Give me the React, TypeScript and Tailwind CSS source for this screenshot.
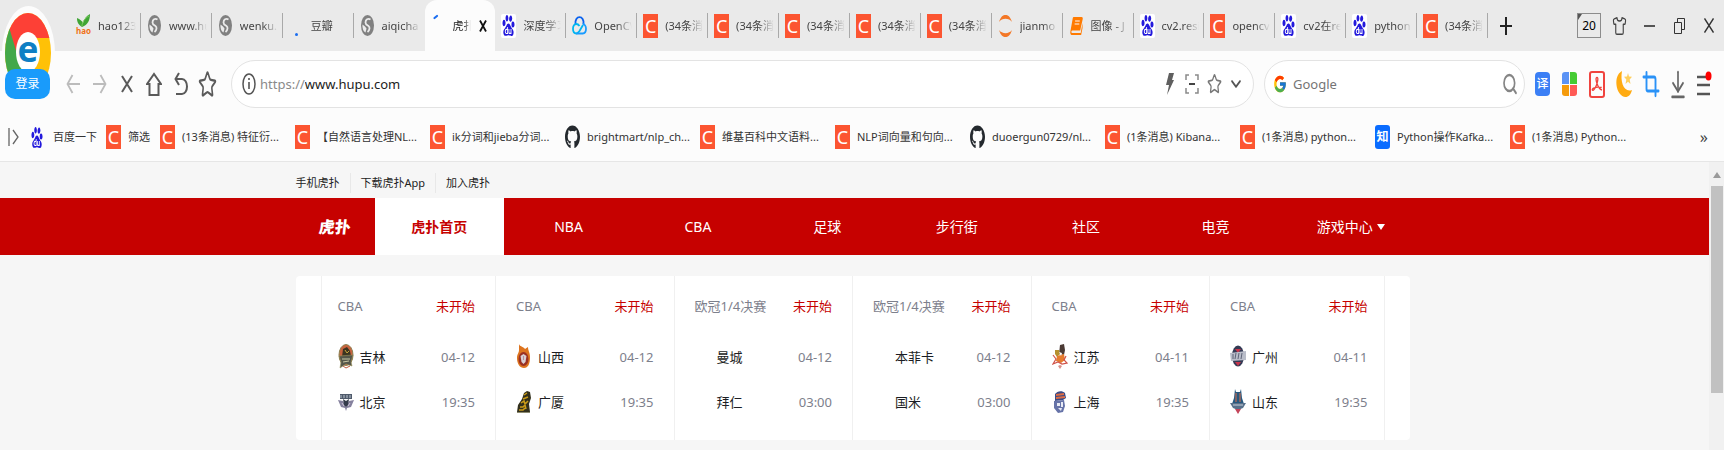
import type { ReactNode } from 'react';
import { SiBaidu } from 'react-icons/si';
import { FaGithub } from 'react-icons/fa';
import { FcGoogle } from 'react-icons/fc';
import { ArrowDownToLine, ChevronDown, Crop, Search, Shirt, Star } from 'lucide-react';

const CsdnIcon = () => (
  <span aria-hidden="true" className="flex h-6 w-[15px] shrink-0 items-center justify-center bg-[#fc5531] text-[18px] leading-6 text-white">
    C
  </span>
);

const BaiduIcon = ({ plain = false }: { plain?: boolean }) => (
  <span className={plain ? 'flex h-6 w-3 shrink-0 items-center' : 'flex h-6 w-[15px] shrink-0 items-center rounded-xs bg-white px-px'}>
    <SiBaidu preserveAspectRatio="none" className="h-[21px] w-full text-[#2319dc]" />
  </span>
);

const GlobeIcon = () => (
  <svg viewBox="0 0 13 21" className="h-[21px] w-[13px] shrink-0">
    <ellipse cx="6.500" cy="10.500" rx="6.500" ry="10.500" fill="#808080" />
    <path d="M9.500 4.500C7 3 4.500 4.500 4.500 7.500c0 2 1.500 2.500 3 3.500s1.500 4-1 6" fill="none" stroke="#ebebeb" strokeWidth="1.800" />
    <path d="M1.500 9.500l2.500 2 1.500 2-1 4C2.300 16.500 1.200 13 1.500 9.500Z" fill="#ebebeb" />
  </svg>
);

const GithubIcon = () => (
  <FaGithub preserveAspectRatio="none" className="h-6 w-[15px] shrink-0 text-[#24292e]" />
);

const HaoIcon = () => (
  <span aria-hidden="true" className="flex h-6 w-[15px] shrink-0 flex-col items-center">
    <svg viewBox="0 0 15 13" className="h-[13px] w-[15px]">
      <path d="M6 13C2 10 1 8 1 4c3 1 5 3 6 5 1-4 3-7 7-9 0 6-2 11-8 13Z" fill="#3fa535" />
      <path d="M6 12c0-4 3-8 7-10" stroke="#7ccb5f" fill="none" />
    </svg>
    <span className="text-[8px] leading-[8px] font-bold text-[#f07318]">hao</span>
  </span>
);

const CloudIcon = () => (
  <svg viewBox="0 0 15 19" className="h-[19px] w-[15px] shrink-0" fill="none" strokeWidth="1.800">
    <path d="M3.500 8C3 4 5 1.200 7.500 1.200S12 4 11.500 8" stroke="#0a62ee" />
    <path d="M7.500 10C6.500 8.500 5.500 8 4.300 8 2.400 8 1 10 1 12.800S2.400 17.500 4.300 17.500c1.200 0 2-.8 3.200-2.500L11 9" stroke="#00b6f0" />
    <path d="M4.300 17.500h6.400c1.900 0 3.300-2 3.300-4.700S12.600 8 10.700 8" stroke="#1a9cff" />
  </svg>
);

const JupyterIcon = () => (
  <svg viewBox="0 0 15 24" className="h-6 w-[15px] shrink-0" fill="#f37726">
    <path d="M1 8C3 2 5 1 7.500 1S12 2 14 8C11 3.800 4 3.800 1 8Z" />
    <path d="M1 16c2 6 4 7 6.500 7s4.500-1 6.500-7c-3 4.200-10 4.200-13 0Z" />
  </svg>
);

const BookIcon = () => (
  <svg viewBox="0 0 14 20" preserveAspectRatio="none" className="h-5 w-[13px] shrink-0">
    <path d="M4 1h8.500c1 0 1.500.8 1.200 2L11 14.500H2.500C1.500 14.500 1 16 2 17h9.500l2-10v5l-1.500 7H2C.5 19 0 17 .4 15.500L3 2c.2-.7.400-1 1-1Z" fill="#ff7a00" />
    <path d="M5.500 5h5M5 8h5" stroke="#fff" />
  </svg>
);

const SpinnerDot = () => (
  <span className="flex h-6 w-[15px] shrink-0 items-end justify-center pb-0.5">
    <span className="size-[3px] rounded-full bg-[#1a6df0]" />
  </span>
);

const SpinnerArc = () => (
  <svg viewBox="0 0 15 24" className="h-6 w-[15px] shrink-0">
    <path d="M3.500 4 6 2" stroke="#1a6df0" strokeWidth="2.200" strokeLinecap="round" />
  </svg>
);

const ZhihuIcon = () => (
  <span aria-hidden="true" className="flex h-6 w-[15px] shrink-0 items-center justify-center rounded-[3px] bg-[#0a6cff] text-[12px] font-bold text-white">
    知
  </span>
);

type Tab = { label: string; icon: ReactNode; active?: boolean };

const tabs: Tab[] = [
  { label: 'hao123', icon: <HaoIcon /> },
  { label: 'www.hu', icon: <GlobeIcon /> },
  { label: 'wenku.', icon: <GlobeIcon /> },
  { label: '豆瓣', icon: <SpinnerDot /> },
  { label: 'aiqicha', icon: <GlobeIcon /> },
  { label: '虎扑', icon: <SpinnerArc />, active: true },
  { label: '深度学习', icon: <BaiduIcon /> },
  { label: 'OpenCV', icon: <CloudIcon /> },
  { label: '(34条消息', icon: <CsdnIcon /> },
  { label: '(34条消息', icon: <CsdnIcon /> },
  { label: '(34条消息', icon: <CsdnIcon /> },
  { label: '(34条消息', icon: <CsdnIcon /> },
  { label: '(34条消息', icon: <CsdnIcon /> },
  { label: 'jianmo', icon: <JupyterIcon /> },
  { label: '图像 - J', icon: <BookIcon /> },
  { label: 'cv2.resi', icon: <BaiduIcon /> },
  { label: 'opencv', icon: <CsdnIcon /> },
  { label: 'cv2在re', icon: <BaiduIcon /> },
  { label: 'python', icon: <BaiduIcon /> },
  { label: '(34条消息', icon: <CsdnIcon /> },
];

const bookmarks: { label: string; icon: ReactNode }[] = [
  { label: '(13条消息) 特征衍...', icon: <CsdnIcon /> },
  { label: '【自然语言处理NL...', icon: <CsdnIcon /> },
  { label: 'ik分词和jieba分词...', icon: <CsdnIcon /> },
  { label: 'brightmart/nlp_ch...', icon: <GithubIcon /> },
  { label: '维基百科中文语料...', icon: <CsdnIcon /> },
  { label: 'NLP词向量和句向...', icon: <CsdnIcon /> },
  { label: 'duoergun0729/nl...', icon: <GithubIcon /> },
  { label: '(1条消息) Kibana...', icon: <CsdnIcon /> },
  { label: '(1条消息) python...', icon: <CsdnIcon /> },
  { label: 'Python操作Kafka...', icon: <ZhihuIcon /> },
  { label: '(1条消息) Python...', icon: <CsdnIcon /> },
];

const navItems = ['虎扑首页', 'NBA', 'CBA', '足球', '步行街', '社区', '电竞', '游戏中心'];

const JilinLogo = () => (
  <svg viewBox="0 0 16 25" className="h-[25px] w-4">
    <ellipse cx="8" cy="11" rx="7" ry="10.500" fill="#c9633f" stroke="#8a8152" />
    <path d="M5 5l4-2 3 4 1 5-9 1Z" fill="#3b3420" />
    <path d="M7 6l2 3 2-2" stroke="#c8a23c" fill="none" />
    <path d="M1 12l14-1-2 7 1 4-6-2-6 4 1-6Z" fill="#55564a" stroke="#9b9159" strokeWidth=".6" />
    <path d="M4 15h8M5 18l6-1" stroke="#c9c8a4" />
    <path d="M5 22l3 2 4-2" stroke="#c05b3d" fill="none" />
  </svg>
);

const BeijingLogo = () => (
  <svg viewBox="0 0 16 25" className="h-[25px] w-4">
    <path d="M2 5h12v5H2Z" fill="#4f5a6b" />
    <path d="M3 6v3M6 6v3M9 6v3M12 6v3" stroke="#bcc5d0" />
    <path d="M0 11l5 1 3 6 3-6 5-1-3 7-4 1-1 3-1-3-4-1Z" fill="#85819e" />
    <path d="M5 10l3 2 3-2-1 6-2 2-2-2Z" fill="#343b4b" />
    <path d="M4 14l2 3M12 14l-2 3" stroke="#d2c9d8" />
  </svg>
);

const ShanxiLogo = () => (
  <svg viewBox="0 0 16 25" className="h-[25px] w-4">
    <path d="M3 0c1 3 4 2 6 5l3-2c0 4 2 5 2 10 0 7-2 11-6 11S1 20 1 14c0-4 2-5 2-8Z" fill="#dd741f" />
    <ellipse cx="7.500" cy="15" rx="5" ry="7" fill="#9b3022" />
    <path d="M4.500 12l3-2 3 2-1 6-2 2-2-2Z" fill="#d8cfd4" />
    <path d="M7.500 12v4" stroke="#b98d98" />
  </svg>
);

const GuangshaLogo = () => (
  <svg viewBox="0 0 16 25" className="h-[25px] w-4">
    <path d="M8 4l3-2 3 1 1 6-2 6 1 8H1l1-7 4-6Z" fill="#33301c" />
    <path d="M8 6l3-2M7 10l5-2M5 14l3-2 1 3 3-3M4 18h3l2-2 1 4M3 21h4l2-2" stroke="#c99b18" strokeWidth="1.500" fill="none" />
    <path d="M1 23.500h13" stroke="#8b8a70" />
  </svg>
);

const JiangsuLogo = () => (
  <svg viewBox="0 0 16 25" className="h-[25px] w-4">
    <path d="M8 1l4-1 1 6-1 5-5-1Z" fill="#4a3a34" />
    <path d="M3 6l4 0 1 4-3 3-2-3Z" fill="#b5902f" />
    <path d="M5 12l7-2 1 6-4 3-5-2Z" fill="#e57c2e" />
    <path d="M7 8l3 1-1 3Z" fill="#fff" />
    <path d="M1 11l3 4-3 5 5-2 4 2 5-1-3-3 2-4" stroke="#d05349" strokeWidth="1.200" fill="none" />
    <path d="M6 22l2-1 2 1-2 3Z" fill="#d98e88" />
  </svg>
);

const ShanghaiLogo = () => (
  <svg viewBox="0 0 16 25" className="h-[25px] w-4">
    <path d="M3 5c2-3 7-4 10-1l1 5-3 2-8 1Z" fill="#3a4a86" />
    <path d="M4 6l8-1M4 9l9-1" stroke="#dd6c45" strokeWidth="1.800" />
    <path d="M2 12l10-1 1 6-2 6-5 1-4-5Z" fill="#6673a8" />
    <path d="M5 14h3v3H5ZM9 13h2v5H9ZM6 19l4 0-1 3Z" fill="#e8eaf4" />
  </svg>
);

const GuangzhouLogo = () => (
  <svg viewBox="0 0 16 25" className="h-[25px] w-4">
    <ellipse cx="8" cy="12" rx="6" ry="10.500" fill="#343a54" />
    <path d="M5 5h6l-3 4Z" fill="#c7354c" />
    <path d="M0 9l16-2v9L1 17Z" fill="#b9bdc9" />
    <path d="M3 10v5M6 9l-1 6M9 9l-1 6M12 9l-1 6" stroke="#5d6377" />
    <path d="M5 18h6l-3 4Z" fill="#c7354c" />
  </svg>
);

const ShandongLogo = () => (
  <svg viewBox="0 0 16 25" className="h-[25px] w-4">
    <path d="M5 0l1 3h4l1-3 1 9 2 6H2l2-6Z" fill="#28587e" />
    <path d="M6 4v9M10 4v9" stroke="#d96f4f" />
    <path d="M0 14h16l-3 5-5 2-5-2Z" fill="#58708a" />
    <path d="M3 16h10" stroke="#c8d0da" />
    <path d="M5 20h6l-3 5Z" fill="#c4445a" />
  </svg>
);

type Team = { name: string; logo?: ReactNode };
type Match = { league: string; date: string; time: string; home: Team; away: Team };

const matches: Match[] = [
  { league: 'CBA', date: '04-12', time: '19:35', home: { name: '吉林', logo: <JilinLogo /> }, away: { name: '北京', logo: <BeijingLogo /> } },
  { league: 'CBA', date: '04-12', time: '19:35', home: { name: '山西', logo: <ShanxiLogo /> }, away: { name: '广厦', logo: <GuangshaLogo /> } },
  { league: '欧冠1/4决赛', date: '04-12', time: '03:00', home: { name: '曼城' }, away: { name: '拜仁' } },
  { league: '欧冠1/4决赛', date: '04-12', time: '03:00', home: { name: '本菲卡' }, away: { name: '国米' } },
  { league: 'CBA', date: '04-11', time: '19:35', home: { name: '江苏', logo: <JiangsuLogo /> }, away: { name: '上海', logo: <ShanghaiLogo /> } },
  { league: 'CBA', date: '04-11', time: '19:35', home: { name: '广州', logo: <GuangzhouLogo /> }, away: { name: '山东', logo: <ShandongLogo /> } },
];

function IconButton({ label, wide = false, children }: { label: string; wide?: boolean; children: ReactNode }) {
  return (
    <button type="button" aria-label={label} className={wide ? 'flex h-9 w-[30px] shrink-0 items-center justify-center' : 'flex h-9 w-[27px] shrink-0 items-center justify-center'}>
      {children}
    </button>
  );
}

function Profile() {
  return (
    <div className="absolute top-1.5 left-0.5 z-10 h-[94px] w-[53px]">
      <svg viewBox="0 0 53 94" className="h-[94px] w-[53px]" aria-hidden="true">
        <defs>
          <clipPath id="ball">
            <ellipse cx="26" cy="47" rx="23" ry="40" />
          </clipPath>
        </defs>
        <ellipse cx="26.500" cy="47" rx="26.500" ry="47" fill="#fcfcfc" />
        <g clipPath="url(#ball)">
          <path d="M0 0h53v94H0Z" fill="#ffc107" />
          <path d="M0 15l8 7 12 35 10 37H0Z" fill="#43a84a" />
          <path d="M6 0h47v32H26L15 48 7 21Z" fill="#fd4036" />
        </g>
        <ellipse cx="26" cy="46" rx="12" ry="20" fill="#fff" />
        <text x="26" y="56" textAnchor="middle" fontSize="35" fontWeight="700" fill="#0f7fc4" fontFamily="Noto Sans">e</text>
      </svg>
      <button type="button" className="absolute top-[63px] left-[3px] h-[30px] w-[45px] rounded-[10px] bg-[#199bfb] text-xs text-white">
        登录
      </button>
    </div>
  );
}

function TabStrip() {
  return (
    <div className="flex h-[51px] bg-[#eaeaea] pl-[70px]">
      <div role="tablist" className="grid min-w-0 flex-1 auto-cols-[minmax(0,1fr)] grid-flow-col">
        {tabs.map((tab, i) => (
          <div
            key={i}
            className={tab.active ? 'flex min-w-0 items-center rounded-t-xl bg-[#fcfcfc] pr-2 pl-1.5' : 'flex min-w-0 items-center pl-1.5'}
          >
            <button
              type="button"
              role="tab"
              aria-selected={!!tab.active}
              className={tab.active ? 'flex min-w-0 flex-1 items-center gap-[7px] text-[#222]' : 'flex min-w-0 flex-1 items-center gap-[7px] text-[#444]'}
            >
              <span className="flex w-[15px] shrink-0 justify-center">{tab.icon}</span>
              <span className="min-w-0 flex-1 overflow-hidden text-left text-[11px] leading-5 whitespace-nowrap [mask-image:linear-gradient(to_right,black_60%,transparent)]">
                {tab.label}
              </span>
            </button>
            {tab.active ? (
              <button type="button" aria-label="关闭标签" className="ml-2 flex h-5 w-2 items-center">
                <svg viewBox="0 0 8 12" className="h-3 w-2" stroke="#111" strokeWidth="1.800">
                  <path d="M1 .5l6 11M7 .5l-6 11" />
                </svg>
              </button>
            ) : (
              <span className={i === 4 ? 'ml-1 h-[25px] w-px' : 'ml-1 h-[25px] w-px bg-[#a9a9a9]'} />
            )}
          </div>
        ))}
      </div>
      <div className="flex w-[236px] shrink-0 items-center">
        <button type="button" aria-label="新标签" className="flex h-9 w-9 items-center justify-center">
          <svg viewBox="0 0 12 18" className="h-[18px] w-3" stroke="#222" strokeWidth="2">
            <path d="M6 0v18M0 9h12" />
          </svg>
        </button>
        <div className="ml-auto flex">
          <button type="button" aria-label="20 个标签" className="flex h-9 w-[30px] items-center justify-center">
            <span className="relative flex h-[25px] w-6 items-center justify-center border border-[#8c8c8c] text-xs text-black">
              20
              <span className="absolute top-0 left-0 border-t-[6px] border-r-[4px] border-t-[#555] border-r-transparent" />
            </span>
          </button>
          <IconButton label="皮肤" wide>
            <Shirt preserveAspectRatio="none" className="h-5 w-[15px] text-[#444]" strokeWidth={1.8} />
          </IconButton>
          <IconButton label="最小化" wide>
            <span className="h-0.5 w-[11px] bg-[#555]" />
          </IconButton>
          <IconButton label="还原" wide>
            <svg viewBox="0 0 11 16" className="h-4 w-[11px]" fill="none" stroke="#333">
              <path d="M.5 4.500h7v11h-7ZM3.500 4V.5h7v11H8" />
            </svg>
          </IconButton>
          <IconButton label="关闭" wide>
            <svg viewBox="0 0 10 15" className="h-[15px] w-2.5" stroke="#333" strokeWidth="1.400">
              <path d="M.5.5l9 14M9.500.5l-9 14" />
            </svg>
          </IconButton>
        </div>
      </div>
    </div>
  );
}

function Toolbar() {
  return (
    <div className="flex h-[66px] items-center gap-2.5 pr-1.5 pl-[59px]">
      <div className="flex">
        <IconButton label="后退">
          <svg viewBox="0 0 14 20" className="h-5 w-3.5" fill="none" stroke="#bcbcbc" strokeWidth="1.800">
            <path d="M14 10H1.500M6.500 1l-5 9 5 9" />
          </svg>
        </IconButton>
        <IconButton label="前进">
          <svg viewBox="0 0 14 20" className="h-5 w-3.5" fill="none" stroke="#bcbcbc" strokeWidth="1.800">
            <path d="M0 10h12.500M7.500 1l5 9-5 9" />
          </svg>
        </IconButton>
        <IconButton label="停止">
          <svg viewBox="0 0 12 18" className="h-[18px] w-3" stroke="#5a5a5a" strokeWidth="2">
            <path d="M1 1l10 16M11 1L1 17" />
          </svg>
        </IconButton>
        <IconButton label="主页">
          <svg viewBox="0 0 16 24" className="h-6 w-4" fill="none" stroke="#5a5a5a" strokeWidth="2">
            <path d="M3.500 12H1L8 2l7 10h-2.500v11h-9Z" />
          </svg>
        </IconButton>
        <IconButton label="恢复">
          <svg viewBox="0 0 14 24" className="h-6 w-3.5" fill="none" stroke="#5a5a5a" strokeWidth="2">
            <path d="M5 1L1.500 7 5 13M1.500 7H8c3 0 5 3.500 5 7.500S11 22 8 22H2" />
          </svg>
        </IconButton>
        <IconButton label="收藏">
          <Star preserveAspectRatio="none" className="h-[29px] w-[19px] text-[#5a5a5a]" strokeWidth={2} />
        </IconButton>
      </div>
      <form className="flex h-12 min-w-0 flex-1 items-center rounded-3xl border border-[#e3e3e3] bg-white pr-1.5 pl-2.5">
        <svg viewBox="0 0 14 22" className="h-[22px] w-3.5 shrink-0" fill="none" stroke="#555" strokeWidth="1.500">
          <ellipse cx="7" cy="11" rx="6" ry="10" />
          <path d="M7 9v7M7 5v2" strokeWidth="1.600" />
        </svg>
        <label htmlFor="address" className="ml-1 text-[13px] leading-6 text-[#8a8a8a]">https://</label>
        <input id="address" defaultValue="www.hupu.com" className="min-w-0 flex-1 bg-transparent text-[13px] leading-6 text-[#222] outline-none" />
        <div className="flex items-center">
          <button type="button" aria-label="极速" className="flex w-[22px] justify-center">
            <svg viewBox="0 0 8 22" className="h-[22px] w-2" fill="#5f5f5f">
              <path d="M3 0h5L6 7h2L1 22l2-10H0Z" />
            </svg>
          </button>
          <button type="button" aria-label="扫描" className="flex w-[22px] justify-center">
            <svg viewBox="0 0 14 20" className="h-5 w-3.5" fill="none" stroke="#8a8a8a" strokeWidth="1.500">
              <path d="M4 1H1v5M10 1h3v5M1 14v5h3M13 14v5h-3" />
              <path d="M4 10h6" stroke="#444" strokeWidth="2" />
            </svg>
          </button>
          <button type="button" aria-label="加入收藏" className="flex w-[22px] justify-center">
            <Star preserveAspectRatio="none" className="h-[22px] w-[15px] text-[#777]" strokeWidth={2} />
          </button>
          <button type="button" aria-label="展开" className="flex w-[22px] justify-center">
            <ChevronDown preserveAspectRatio="none" className="h-[22px] w-4 text-[#555]" strokeWidth={2.5} />
          </button>
        </div>
      </form>
      <div className="flex items-center gap-1">
        <form className="flex h-12 w-[261px] items-center rounded-3xl border border-[#e3e3e3] bg-white pr-1.5 pl-2">
          <FcGoogle preserveAspectRatio="none" className="h-5 w-3.5 shrink-0" />
          <input aria-label="搜索" placeholder="Google" className="ml-1.5 min-w-0 flex-1 bg-transparent text-[13px] leading-6 text-[#333] outline-none placeholder:text-[#757575]" />
          <button type="submit" aria-label="搜索">
            <Search preserveAspectRatio="none" className="h-6 w-4 text-[#858585]" strokeWidth={2.5} />
          </button>
        </form>
        <div className="flex">
          <IconButton label="翻译">
            <span className="flex h-6 w-[15px] items-center justify-center rounded bg-[#3b7ff5] text-[12px] font-medium text-white">译</span>
          </IconButton>
          <IconButton label="应用">
            <span className="grid h-6 w-[15px] grid-cols-2 gap-px">
              <span className="rounded-tl-[3px] bg-[#5b93f5]" />
              <span className="rounded-tr-[3px] bg-[#45cb33]" />
              <span className="rounded-bl-[3px] bg-[#f59b0c]" />
              <span className="rounded-br-[3px] bg-[#ff5a55]" />
            </span>
          </IconButton>
          <IconButton label="PDF">
            <svg viewBox="0 0 16 27" className="h-[27px] w-4" fill="none" stroke="#f0443f">
              <rect x="1" y="1" width="14" height="25" rx="2" strokeWidth="2" />
              <path d="M8 6.500c-1.500 0-1 3 0 6s3 6 5 6.500M8 6.500c1.500 0 .8 4-.5 7.500S4 20.500 3.300 19 6 15.500 12.700 16.500" strokeWidth="1.300" />
            </svg>
          </IconButton>
          <IconButton label="夜间模式">
            <svg viewBox="0 0 16 26" className="h-[26px] w-4" fill="#ffab12">
              <path d="M6 0C1 3 0 8 .5 14S5 26 9.500 26c3 0 5.500-2.500 6.500-7C8 22 4 11 6 0Z" />
              <path d="M12 2l1 3.500 3 .3-2.300 2.700.8 4.500L12 10.700 9.500 13l.8-4.500L8 5.800l3-.3Z" fill="#ffcf5c" />
            </svg>
          </IconButton>
          <IconButton label="截图">
            <Crop preserveAspectRatio="none" className="h-7 w-[18px] text-[#2a92f7]" strokeWidth={2.5} />
          </IconButton>
          <IconButton label="下载">
            <ArrowDownToLine preserveAspectRatio="none" className="h-[33px] w-5 text-[#666]" strokeWidth={2} />
          </IconButton>
          <IconButton label="菜单">
            <svg viewBox="0 0 15 26" className="h-[26px] w-[15px]">
              <path d="M0 6h13M0 14h13M0 23h13" stroke="#555" strokeWidth="2.500" />
              <ellipse cx="11.500" cy="5" rx="3" ry="4.500" fill="#f00" />
            </svg>
          </IconButton>
        </div>
      </div>
    </div>
  );
}

function BookmarkBar() {
  return (
    <div className="flex h-[45px] items-center border-b border-[#e6e6e6] pr-4 pb-1 pl-2 text-[11px] leading-5 text-[#333]">
      <button type="button" aria-label="折叠书签" className="w-[23px] shrink-0">
        <svg viewBox="0 0 11 18" className="h-[18px] w-[11px]" fill="none" stroke="#666" strokeWidth="1.300">
          <path d="M1 0v18M5 2l5 7-5 7" />
        </svg>
      </button>
      <a href="#baidu" className="flex w-[75px] shrink-0 items-center gap-2.5 whitespace-nowrap"><BaiduIcon plain />百度一下</a>
      <a href="#filter" className="flex w-[54px] shrink-0 items-center gap-[7px] whitespace-nowrap"><CsdnIcon />筛选</a>
      <div className="flex min-w-0 flex-1 overflow-hidden">
        {bookmarks.map((b) => (
          <a key={b.label} href="#bookmark" className="flex w-[135px] shrink-0 items-center gap-[7px] whitespace-nowrap">
            {b.icon}
            {b.label}
          </a>
        ))}
      </div>
      <button type="button" aria-label="更多书签" className="text-base leading-5 text-[#444]">»</button>
    </div>
  );
}

function TeamRow({ team, value }: { team: Team; value: string }) {
  return (
    <div className="flex h-[45px] items-center">
      <span className="w-[22px] shrink-0">{team.logo}</span>
      <span className="text-[#1c1e24]">{team.name}</span>
      <span className="ml-auto text-[#7d808c]">{value}</span>
    </div>
  );
}

function MatchCard({ match }: { match: Match }) {
  return (
    <article className="min-w-0 flex-1 border-r border-[#f0f0f0] px-5 py-4 text-[13px] leading-7 first:pl-4 last:pr-4">
      <div className="mb-3.5 flex justify-between">
        <span className="text-[#7d808c]">{match.league}</span>
        <span className="text-[#c60100]">未开始</span>
      </div>
      <TeamRow team={match.home} value={match.date} />
      <TeamRow team={match.away} value={match.time} />
    </article>
  );
}

function Page() {
  return (
    <main className="min-w-0 flex-1 bg-[#f6f6f6]">
      <div className="mx-auto flex h-9 max-w-[1118px] items-center pt-1.5 text-[11px] leading-5 text-[#222]">
        <a href="#mobile" className="border-r border-[#e8e8e8] pr-2.5">手机虎扑</a>
        <a href="#app" className="border-r border-[#e8e8e8] px-2.5">下载虎扑App</a>
        <a href="#join" className="pl-2.5">加入虎扑</a>
      </div>
      <header className="bg-[#c60100]">
        <div className="mx-auto flex h-[57px] max-w-[1118px] pr-1">
          <a href="#home" className="flex w-[79px] shrink-0 items-center justify-center text-white">
            <span className="-skew-x-6 text-[16px] leading-10 font-black">虎扑</span>
          </a>
          <nav className="flex min-w-0 flex-1 text-sm">
            {navItems.map((item, i) => (
              <a
                key={item}
                href="#nav"
                className={i === 0 ? 'flex flex-1 basis-0 items-center justify-center bg-white font-bold text-[#c60100]' : 'flex flex-1 basis-0 items-center justify-center gap-1 text-white'}
              >
                {i === navItems.length - 1 && <span className="w-2" />}
                {item}
                {i === navItems.length - 1 && <span className="border-x-[4px] border-t-[6px] border-x-transparent border-t-white" />}
              </a>
            ))}
          </nav>
        </div>
      </header>
      <div className="mx-auto max-w-[1118px] pt-[21px] pr-1 pb-2">
        <section className="flex rounded bg-white px-[25px]">
          <div className="flex min-w-0 flex-1 border-l border-[#f0f0f0]">
            {matches.map((m, i) => (
              <MatchCard key={i} match={m} />
            ))}
          </div>
        </section>
      </div>
    </main>
  );
}

export default function App() {
  return (
    <div className="relative flex min-h-screen flex-col bg-[#fcfcfc] font-['Noto_Sans','Noto_Sans_CJK_SC',sans-serif]">
      <Profile />
      <TabStrip />
      <Toolbar />
      <BookmarkBar />
      <div className="flex flex-1">
        <Page />
        <div aria-hidden="true" className="flex w-[15px] shrink-0 flex-col items-center bg-[#f1f1f1] pt-2.5">
          <span className="border-x-[4px] border-b-[6px] border-x-transparent border-b-[#9a9a9a]" />
          <span className="mt-2 h-[207px] w-3 bg-[#c1c1c1]" />
        </div>
      </div>
    </div>
  );
}
